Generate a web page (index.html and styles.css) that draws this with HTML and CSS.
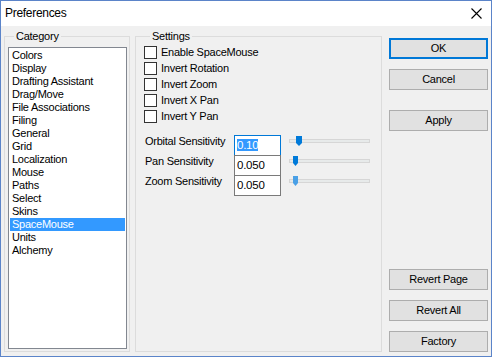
FILE: index.html
```html
<!DOCTYPE html>
<html>
<head>
<meta charset="utf-8">
<link rel="stylesheet" href="styles.css">
</head>
<body>
<div class="window">
  <div class="titlebar">
    <span class="title">Preferences</span>
    <svg class="close" width="12" height="12" viewBox="0 0 12 12"><path d="M0.5 0.5 L10.5 10.5 M10.5 0.5 L0.5 10.5" stroke="#000" stroke-width="1.1" fill="none"/></svg>
  </div>
  <div class="content">
    <fieldset class="group category">
      <legend>Category</legend>
      <ul class="listbox">
        <li>Colors</li>
        <li>Display</li>
        <li>Drafting Assistant</li>
        <li>Drag/Move</li>
        <li>File Associations</li>
        <li>Filing</li>
        <li>General</li>
        <li>Grid</li>
        <li>Localization</li>
        <li>Mouse</li>
        <li>Paths</li>
        <li>Select</li>
        <li>Skins</li>
        <li class="selected">SpaceMouse</li>
        <li>Units</li>
        <li>Alchemy</li>
      </ul>
    </fieldset>
    <fieldset class="group settings">
      <legend>Settings</legend>
      <div class="checks">
        <label class="check"><span class="box"></span>Enable SpaceMouse</label>
        <label class="check"><span class="box"></span>Invert Rotation</label>
        <label class="check"><span class="box"></span>Invert Zoom</label>
        <label class="check"><span class="box"></span>Invert X Pan</label>
        <label class="check"><span class="box"></span>Invert Y Pan</label>
      </div>
      <div class="sens">
        <div class="row">
          <span class="lbl">Orbital Sensitivity</span>
          <span class="field focused"><span class="sel">0.10</span></span>
          <svg class="slider" width="82" height="11" viewBox="0 0 82 11"><rect x="0.5" y="3.5" width="80" height="3" fill="#e7eaea" stroke="#d6d6d6"/><path d="M7 0 H13 V7 L10 10 L7 7 Z" fill="#007ad9"/></svg>
        </div>
        <div class="row">
          <span class="lbl">Pan Sensitivity</span>
          <span class="field">0.050</span>
          <svg class="slider" width="82" height="11" viewBox="0 0 82 11"><rect x="0.5" y="3.5" width="80" height="3" fill="#e7eaea" stroke="#d6d6d6"/><path d="M4 0 H9 V7 L6.5 10 L4 7 Z" fill="#007ad9"/></svg>
        </div>
        <div class="row">
          <span class="lbl">Zoom Sensitivity</span>
          <span class="field">0.050</span>
          <svg class="slider" width="82" height="11" viewBox="0 0 82 11"><rect x="0.5" y="3.5" width="80" height="3" fill="#e7eaea" stroke="#d6d6d6"/><path d="M4 0 H9 V7 L6.5 10 L4 7 Z" fill="#4aa0e6"/></svg>
        </div>
      </div>
    </fieldset>
    <div class="buttons">
      <div class="btn default">OK</div>
      <div class="btn">Cancel</div>
      <div class="btn apply">Apply</div>
      <div class="spacer"></div>
      <div class="btn">Revert Page</div>
      <div class="btn">Revert All</div>
      <div class="btn">Factory</div>
    </div>
  </div>
</div>
</body>
</html>
```
FILE: styles.css
```css
* { box-sizing: border-box; }
html, body { margin: 0; padding: 0; background: #f0f0f0; }
body {
  font-family: "Liberation Sans", Arial, sans-serif;
  font-size: 11px;
  letter-spacing: -0.25px;
  color: #000;
}
.window {
  width: 492px;
  height: 357px;
  border: 1px solid #5b84c9;
  display: flex;
  flex-direction: column;
  background: #f0f0f0;
}
.titlebar {
  height: 25px;
  background: #fff;
  display: flex;
  align-items: center;
  justify-content: space-between;
  padding: 0 8px 0 4px;
}
.title {
  font-size: 12px;
  letter-spacing: -0.3px;
  line-height: 25px;
}
.close { margin-top: 1px; }
.content {
  flex: 1;
  display: flex;
  padding: 4px 3px 4px 3px;
  min-height: 0;
}
.group {
  margin: 0;
  border: 1px solid #dcdcdc;
  min-width: 0;
}
.group legend {
  padding: 0 2px;
  margin-left: 6px;
  line-height: 12px;
  height: 12px;
}
.category {
  width: 126px;
  padding: 5px 2px 2px 3px;
  display: flex;
  flex-direction: column;
}
.listbox {
  list-style: none;
  margin: 0;
  padding: 1px;
  flex: 1;
  background: #fff;
  border: 1px solid #828790;
}
.listbox li {
  height: 13px;
  line-height: 13px;
  padding-left: 2px;
  white-space: nowrap;
}
.listbox li.selected {
  background: #3399ff;
  color: #fff;
}
.settings {
  width: 247px;
  margin-left: 5px;
  padding: 4px 8px 0 8px;
}
.checks {
  display: flex;
  flex-direction: column;
  gap: 3px;
}
.check {
  display: flex;
  align-items: center;
  height: 13px;
  line-height: 13px;
}
.box {
  width: 13px;
  height: 13px;
  border: 1px solid #333;
  background: #fff;
  margin-right: 4px;
  flex: none;
}
.sens {
  margin-top: 12px;
}
.row {
  display: flex;
  align-items: flex-start;
  height: 20px;
}
.lbl {
  width: 90px;
  padding-left: 1px;
  line-height: 13px;
  white-space: nowrap;
}
.field {
  width: 47px;
  height: 21px;
  border: 1px solid #7a7a7a;
  background: #fff;
  padding: 2px 2px 0 2px;
  line-height: 15px;
  font-size: 11.5px;
}
.field.focused { border-color: #0078d7; }
.sel {
  background: #3399ff;
  color: #fff;
}
.slider {
  margin-left: 8px;
  margin-top: 1px;
}
.buttons {
  width: 99px;
  margin-left: 7px;
  display: flex;
  flex-direction: column;
  gap: 10px;
}
.btn {
  height: 21px;
  border: 1px solid #adadad;
  background: #e1e1e1;
  text-align: center;
  line-height: 19px;
}
.btn.default {
  border: 2px solid #0078d7;
  line-height: 17px;
  margin-top: 8px;
}
.btn.apply { margin-top: 10px; }
.spacer { flex: 1; margin: -10px 0 0; }
```
